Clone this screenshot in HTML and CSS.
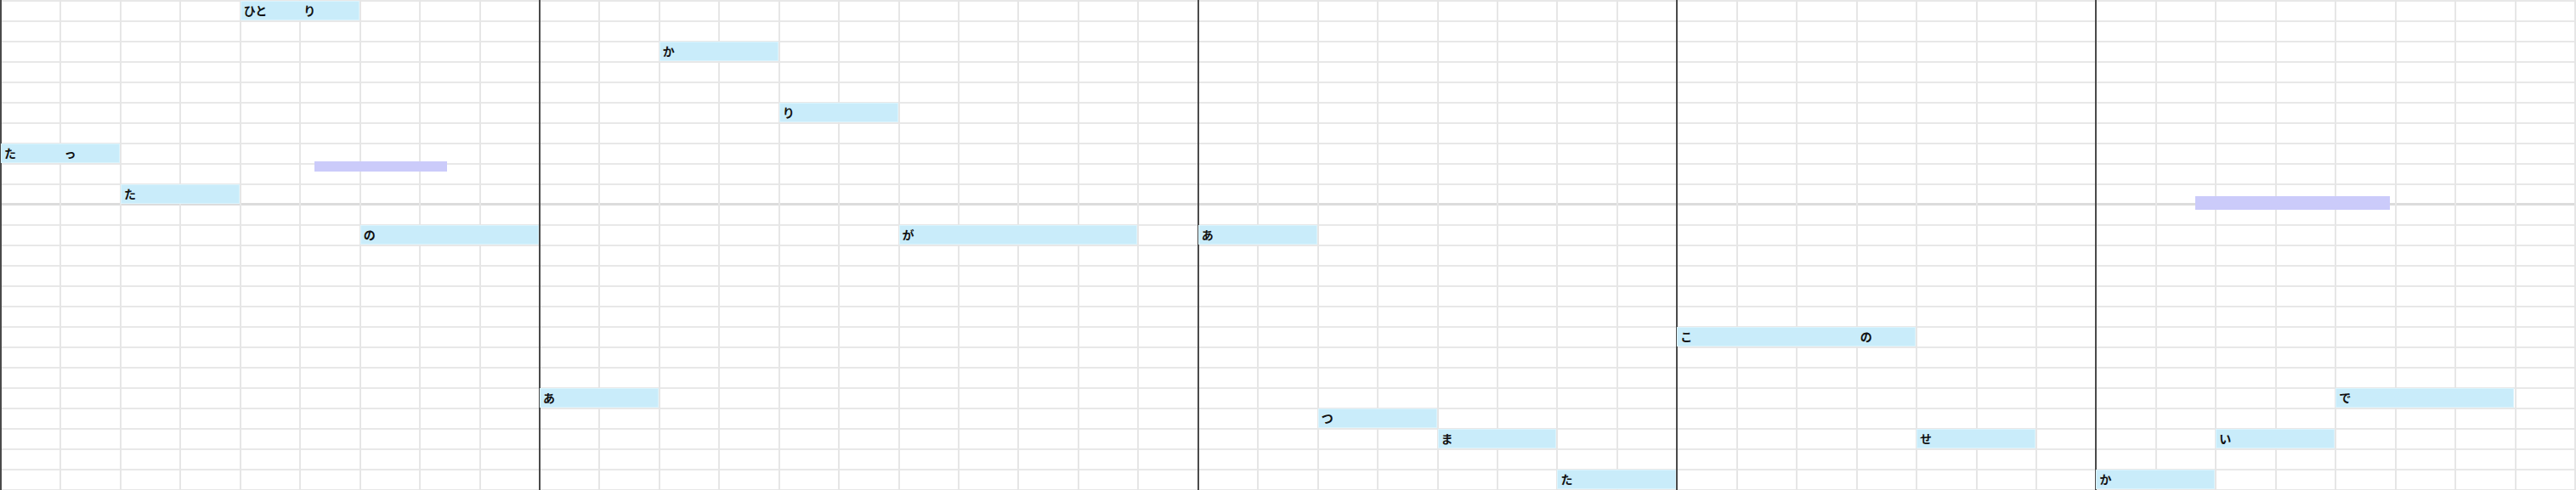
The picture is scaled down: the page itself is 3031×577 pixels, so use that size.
FILE: index.html
```html
<!DOCTYPE html>
<html>
  <head>
    <title>Piano roll</title>
    <link rel="stylesheet" href="styles.css">
  </head>
  <body>
    <div class="roll">
      <!-- grid: 5 bars, one cell per beat -->
      <div class="grid">
        <div class="bar bar-9">
          <div class="beat"></div><div class="beat"></div><div class="beat"></div>
          <div class="beat"></div><div class="beat"></div><div class="beat"></div>
          <div class="beat"></div><div class="beat"></div><div class="beat"></div>
        </div>
        <div class="bar bar-11">
          <div class="beat"></div><div class="beat"></div><div class="beat"></div>
          <div class="beat"></div><div class="beat"></div><div class="beat"></div>
          <div class="beat"></div><div class="beat"></div><div class="beat"></div>
          <div class="beat"></div><div class="beat"></div>
        </div>
        <div class="bar bar-8">
          <div class="beat"></div><div class="beat"></div><div class="beat"></div>
          <div class="beat"></div><div class="beat"></div><div class="beat"></div>
          <div class="beat"></div><div class="beat"></div>
        </div>
        <div class="bar bar-7">
          <div class="beat"></div><div class="beat"></div><div class="beat"></div>
          <div class="beat"></div><div class="beat"></div><div class="beat"></div>
          <div class="beat"></div>
        </div>
        <div class="bar bar-8">
          <div class="beat"></div><div class="beat"></div><div class="beat"></div>
          <div class="beat"></div><div class="beat"></div><div class="beat"></div>
          <div class="beat"></div><div class="beat"></div>
        </div>
      </div>

      <!-- notes: col / row / length in beats -->
      <div class="note" style="--col:4;--row:0;--len:2"><span class="syl" style="--len:1">ひと</span><span class="syl" style="--len:1">り</span></div>
      <div class="note" style="--col:0;--row:7;--len:2"><span class="syl" style="--len:1">た</span><span class="syl" style="--len:1">っ</span></div>
      <div class="note" style="--col:2;--row:9;--len:2"><span class="syl" style="--len:2">た</span></div>
      <div class="note" style="--col:6;--row:11;--len:3"><span class="syl" style="--len:3">の</span></div>

      <div class="note" style="--col:9;--row:19;--len:2"><span class="syl" style="--len:2">あ</span></div>
      <div class="note" style="--col:11;--row:2;--len:2"><span class="syl" style="--len:2">か</span></div>
      <div class="note" style="--col:13;--row:5;--len:2"><span class="syl" style="--len:2">り</span></div>
      <div class="note" style="--col:15;--row:11;--len:4"><span class="syl" style="--len:4">が</span></div>

      <div class="note" style="--col:20;--row:11;--len:2"><span class="syl" style="--len:2">あ</span></div>
      <div class="note" style="--col:22;--row:20;--len:2"><span class="syl" style="--len:2">つ</span></div>
      <div class="note" style="--col:24;--row:21;--len:2"><span class="syl" style="--len:2">ま</span></div>
      <div class="note" style="--col:26;--row:23;--len:2"><span class="syl" style="--len:2">た</span></div>

      <div class="note" style="--col:28;--row:16;--len:4"><span class="syl" style="--len:3">こ</span><span class="syl" style="--len:1">の</span></div>
      <div class="note" style="--col:32;--row:21;--len:2"><span class="syl" style="--len:2">せ</span></div>

      <div class="note" style="--col:35;--row:23;--len:2"><span class="syl" style="--len:2">か</span></div>
      <div class="note" style="--col:37;--row:21;--len:2"><span class="syl" style="--len:2">い</span></div>
      <div class="note" style="--col:39;--row:19;--len:3"><span class="syl" style="--len:3">で</span></div>

      <!-- selection / bend markers -->
      <div class="marker" style="left:370px;top:190px;width:156px;height:12px"></div>
      <div class="marker" style="left:2583px;top:231px;width:229px;height:16px"></div>
    </div>
  </body>
</html>
```

FILE: styles.css
```css
body {
  margin: 0;
  background: #ffffff;
}
.roll {
  --beat: 70.44px;
  --rowh: 24px;
  position: relative;
  width: 3031px;
  height: 577px;
  overflow: hidden;
  font-family: "Noto Sans CJK JP", "Noto Sans", sans-serif;
}
.grid {
  display: flex;
  width: 3029px;
  height: 100%;
  border-right: 2px solid #e6e6e6;
  background-image:
    linear-gradient(to bottom, transparent 239px, #dcdcdc 239px, #dcdcdc 242px, transparent 242px),
    repeating-linear-gradient(to bottom, #e8e8e8 0, #e8e8e8 2px, transparent 2px, transparent 24px);
}
.bar {
  display: flex;
  flex-basis: 0;
}
.bar-7 { flex-grow: 7; }
.bar-8 { flex-grow: 8; }
.bar-9 { flex-grow: 9; }
.bar-11 { flex-grow: 11; }
.beat {
  flex: 1;
  background: linear-gradient(to right, #e6e6e6 0, #e6e6e6 2px, transparent 2px);
}
.beat:first-child {
  background: linear-gradient(to right, #4a4a4a 0, #4a4a4a 2px, transparent 2px);
}
.note {
  position: absolute;
  left: calc(var(--col) * var(--beat) + 1px);
  top: calc(var(--row) * var(--rowh) + 1px);
  width: calc(var(--len) * var(--beat) - 1px);
  height: 23px;
  box-sizing: border-box;
  display: flex;
  background: #c9ecfa;
  border: 1px solid #dbf4fd;
  overflow: hidden;
}
.syl {
  flex: 0 0 calc(var(--len) * var(--beat));
  padding-left: 3px;
  box-sizing: border-box;
  font-size: 14px;
  font-weight: bold;
  line-height: 21px;
  color: #111111;
  white-space: nowrap;
}
.marker {
  position: absolute;
  background: #cbcbfa;
}
```
